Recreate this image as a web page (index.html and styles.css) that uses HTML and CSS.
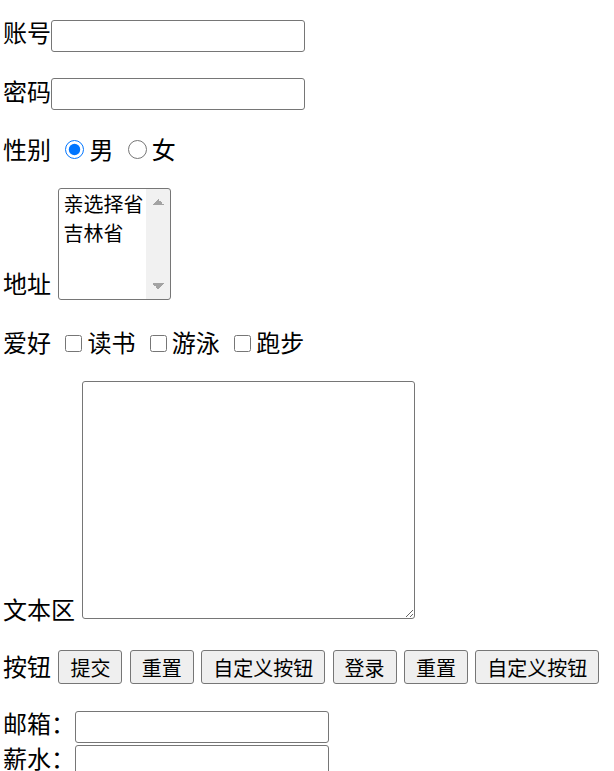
FILE: index.html
```html
<!DOCTYPE html>
<html lang="zh-CN">
<head>
    <meta charset="UTF-8">
    <meta name="viewport" content="width=device-width, initial-scale=1.0">
    <title>表单</title>
    <link rel="stylesheet" href="styles.css">
</head>
<body>
    <form action="#">
        <p>账号<input type="text" class="field"></p>
        <p>密码<input type="password" class="field"></p>
        <p>性别 <input type="radio" name="sex" class="pick" checked>男 <input type="radio" name="sex" class="pick">女</p>
        <p>地址 <select class="area-list" size="4">
                <option>亲选择省</option>
                <option>吉林省</option>
            </select></p>
        <p class="row-hobby">爱好 <input type="checkbox" class="pick tick">读书 <input type="checkbox" class="pick tick">游泳 <input type="checkbox" class="pick tick">跑步</p>
        <p>文本区 <textarea class="note"></textarea></p>
        <p class="row-buttons">按钮 <input type="submit" class="btn" value="提交"> <input type="reset" class="btn" value="重置"> <input type="button" class="btn" value="自定义按钮"> <button class="btn">登录</button> <button type="reset" class="btn">重置</button> <button type="button" class="btn">自定义按钮</button></p>
        邮箱：<input type="email" class="field"><br>
        薪水：<input type="number" class="field">
    </form>
</body>
</html>
```

FILE: styles.css
```css
body {
    margin: 0;
    padding: 0 3px;
    font-family: "Microsoft YaHei", "Noto Sans CJK SC", sans-serif;
    font-size: 24px;
    line-height: 30px;
    color: #000;
    background: #fff;
}
p {
    margin: 24px 0;
}
p:first-child {
    margin-top: 17px;
}
.row-hobby {
    margin-top: 27px;
}
.row-buttons {
    margin-top: 26px;
}
.field {
    width: 254px;
    height: 32px;
    margin: 0;
    padding: 1px 3px;
    border: 1px solid #767676;
    border-radius: 3px;
    font-size: 20px;
    box-sizing: border-box;
}
.pick {
    width: 19px;
    height: 19px;
    margin: 4px 5px 0 9px;
}
.tick {
    width: 17px;
    height: 17px;
}
/* listbox with a drawn, always-on scrollbar */
.area-list {
    width: 113px;
    height: 112px;
    margin: 0 0 0 2px;
    padding: 0 26px 0 0;
    border: 1px solid #767676;
    border-radius: 3px;
    font-family: inherit;
    font-size: 20px;
    line-height: 26px;
    box-sizing: border-box;
    background:
        linear-gradient(to bottom right, transparent 50%, #a3a3a3 50%) right 12px top 10px / 6px 6px no-repeat,
        linear-gradient(to bottom left, transparent 50%, #a3a3a3 50%) right 6px top 10px / 6px 6px no-repeat,
        linear-gradient(to top right, transparent 50%, #a3a3a3 50%) right 12px bottom 10px / 6px 6px no-repeat,
        linear-gradient(to top left, transparent 50%, #a3a3a3 50%) right 6px bottom 10px / 6px 6px no-repeat,
        linear-gradient(#f1f1f1, #f1f1f1) right top / 24px 100% no-repeat,
        #fff;
}
.area-list option {
    padding: 0 4px;
}
.note {
    width: 333px;
    height: 238px;
    margin: 0 0 0 2px;
    border: 1px solid #767676;
    border-radius: 3px;
    box-sizing: border-box;
}
.btn {
    height: 34px;
    margin: 0 0 0 2px;
    padding: 0 11px;
    border: 1px solid #767676;
    border-radius: 3px;
    background: #efefef;
    font-family: inherit;
    font-size: 20px;
    color: #000;
}
```
